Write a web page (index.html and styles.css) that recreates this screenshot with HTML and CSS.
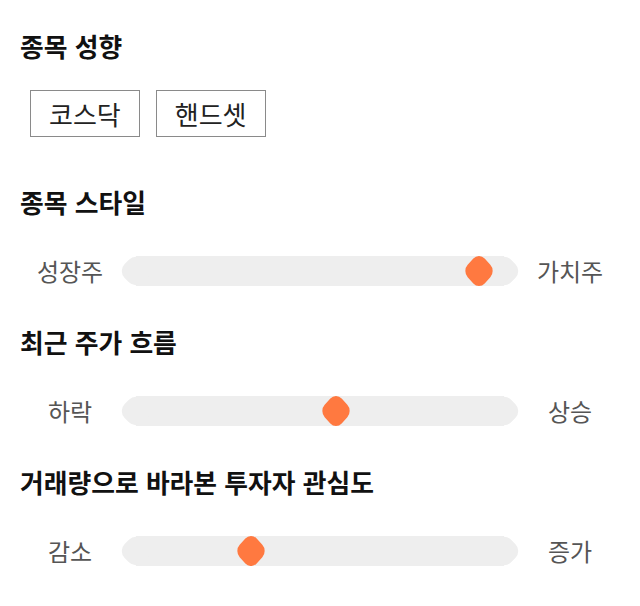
FILE: index.html
```html
<!DOCTYPE html>
<html lang="ko">
<head>
<meta charset="utf-8">
<link rel="stylesheet" href="styles.css">
</head>
<body>
<main class="page">
  <section class="block">
    <h2 class="title">종목 성향</h2>
    <div class="chips">
      <button class="chip">코스닥</button>
      <button class="chip">핸드셋</button>
    </div>
  </section>
  <section class="block">
    <h2 class="title">종목 스타일</h2>
    <div class="slider-row">
      <span class="label">성장주</span>
      <div class="track"><span class="thumb" style="left: 93.2%"></span></div>
      <span class="label">가치주</span>
    </div>
  </section>
  <section class="block">
    <h2 class="title">최근 주가 흐름</h2>
    <div class="slider-row">
      <span class="label">하락</span>
      <div class="track"><span class="thumb" style="left: 54.3%"></span></div>
      <span class="label">상승</span>
    </div>
  </section>
  <section class="block">
    <h2 class="title">거래량으로 바라본 투자자 관심도</h2>
    <div class="slider-row">
      <span class="label">감소</span>
      <div class="track"><span class="thumb" style="left: 31.3%"></span></div>
      <span class="label">증가</span>
    </div>
  </section>
</main>
</body>
</html>
```
FILE: styles.css
```css
* { box-sizing: border-box; }
html, body { margin: 0; padding: 0; background: #fff; }
body {
  font-family: "Noto Sans CJK KR", "Noto Sans", sans-serif;
  color: #111;
}
.page {
  padding: 30px 0 0 0;
  display: flex;
  flex-direction: column;
  gap: 40px;
}
.block { display: flex; flex-direction: column; }
.title {
  margin: 0 0 38px 0;
  padding-left: 20px;
  font-size: 25.8px;
  line-height: 32px;
  font-weight: 700;
  color: #111;
}
.block:first-child .title { margin-bottom: 28px; }
.block:nth-child(2) { margin-top: 9px; }
.chips {
  display: flex;
  gap: 16px;
  padding-left: 30px;
}
.chip {
  font-family: inherit;
  font-size: 26px;
  line-height: 29px;
  padding: 8px 18px;
  border: 1px solid #8a8a8a;
  background: #fff;
  color: #222;
  border-radius: 0;
}
.slider-row {
  display: grid;
  grid-template-columns: 80px 1fr 80px;
  column-gap: 11px;
  align-items: center;
  padding: 0 30px;
  height: 30px;
}
.label {
  text-align: center;
  font-size: 24px;
  line-height: 30px;
  color: #555;
}
.track {
  position: relative;
  height: 30px;
  margin: 0 15px;
  background: #eeeeee;
}
.track::before, .track::after {
  content: "";
  position: absolute;
  top: 2px;
  width: 26px;
  height: 26px;
  border-radius: 10px;
  background: #eeeeee;
  transform: rotate(45deg);
}
.track::before { left: -13px; }
.track::after { right: -13px; }
.thumb {
  position: absolute;
  top: 3px;
  width: 24px;
  height: 24px;
  margin-left: -12px;
  border-radius: 8px;
  background: #ff7940;
  transform: scaleY(1.1) rotate(45deg);
  z-index: 1;
}
```
